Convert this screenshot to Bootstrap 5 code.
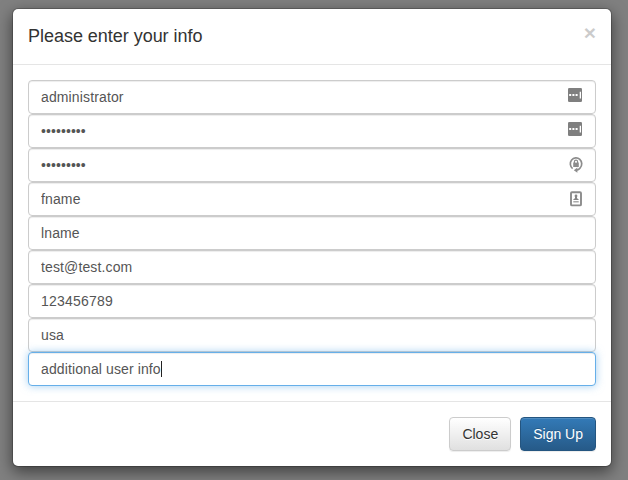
<!DOCTYPE html>
<html lang="en">
<head>
<meta charset="utf-8">
<meta name="viewport" content="width=device-width, initial-scale=1">
<title>Please enter your info</title>
<link rel="stylesheet" href="https://cdn.jsdelivr.net/npm/bootstrap@5.3.0/dist/css/bootstrap.min.css">
<style>
body { background: #808080; font: 14px/20px "Liberation Sans", Arial, sans-serif; color: #333; height: 480px; overflow: hidden; }
.signup-dialog { width: 600px; max-width: none; margin: 8px 0 0 12px; }
.signup-dialog .modal-content { border: 1px solid rgba(0,0,0,.2); border-radius: 6px; box-shadow: 0 5px 15px rgba(0,0,0,.5); background: #fff; background-clip: padding-box; color: #333; }
.signup-dialog .modal-header { height: 56px; padding: 15px; border-bottom: 1px solid #e5e5e5; border-radius: 0; }
.signup-dialog .modal-title { font-size: 18px; line-height: 25px; font-weight: 400; letter-spacing: -.03px; }
.dismiss { border: 0; padding: 0; background: none; font-size: 21px; line-height: 21px; font-weight: 700; color: #000; opacity: .2; text-shadow: 0 1px 0 #fff; margin-top: -2px; }
.signup-dialog .modal-body { padding: 15px; }
.signup-dialog .form-control { height: 34px; padding: 6px 12px; font-size: 14px; line-height: 20px; letter-spacing: .13px; color: #555; border: 1px solid #ccc; border-radius: 4px; background: #fff; box-shadow: inset 0 1px 1px rgba(0,0,0,.075); }
.signup-dialog .form-control[type=password] { letter-spacing: .08px; }
.signup-dialog .form-control[inputmode=numeric] { letter-spacing: .22px; }
.signup-dialog .form-control.editing { letter-spacing: .11px; border-color: #66afe9; box-shadow: inset 0 1px 1px rgba(0,0,0,.075), 0 0 8px rgba(102,175,233,.6); white-space: nowrap; }
.caret-bar { display: inline-block; width: 1px; height: 16px; background: #222; vertical-align: -3px; }
.field-icon { position: absolute; right: 12px; top: 8px; }
.field-icon.dots { right: 13px; top: 7px; }
.signup-dialog .modal-footer { padding: 15px; border-top: 1px solid #e5e5e5; gap: 9px; border-radius: 0; }
.signup-dialog .modal-footer > .btn { height: 34px; margin: 0; padding: 6px 12px; font-size: 14px; line-height: 20px; border-radius: 4px; box-shadow: inset 0 1px 0 rgba(255,255,255,.15), 0 1px 1px rgba(0,0,0,.075); }
.signup-dialog .btn-light { color: #333; text-shadow: 0 1px 0 #fff; border-color: #ccc; background: linear-gradient(#fff, #e0e0e0); }
.signup-dialog .btn-primary { color: #fff; text-shadow: 0 -1px 0 rgba(0,0,0,.2); border-color: #245580; background: linear-gradient(#337ab7, #265a88); }
</style>
<script src="https://cdn.jsdelivr.net/npm/bootstrap@5.3.0/dist/js/bootstrap.bundle.min.js"></script>
</head>
<body>
<div class="modal-dialog signup-dialog">
  <form class="modal-content">
    <div class="modal-header d-flex align-items-start justify-content-between">
      <h4 class="modal-title">Please enter your info</h4>
      <button type="button" class="dismiss" aria-label="Close">×</button>
    </div>
    <div class="modal-body">
      <div class="position-relative">
        <input class="form-control" type="text" value="administrator">
        <svg class="field-icon dots" width="16" height="16" viewBox="0 0 16 16"><rect x="1" y="1" width="14" height="14" rx="1.3" fill="#7f7f7f"/><path d="M2.2 7h2v2h-2zM5.4 7h2v2h-2zM8.6 7h2v2h-2zM12.7 4.8h1.3v6.6h-1.3z" fill="#fff"/></svg>
      </div>
      <div class="position-relative">
        <input class="form-control" type="password" value="123456789">
        <svg class="field-icon dots" width="16" height="16" viewBox="0 0 16 16"><rect x="1" y="1" width="14" height="14" rx="1.3" fill="#7f7f7f"/><path d="M2.2 7h2v2h-2zM5.4 7h2v2h-2zM8.6 7h2v2h-2zM12.7 4.8h1.3v6.6h-1.3z" fill="#fff"/></svg>
      </div>
      <div class="position-relative">
        <input class="form-control" type="password" value="123456789">
        <svg class="field-icon" width="16" height="18" viewBox="0 0 16 18" fill="none" stroke="#8c8c8c"><path d="M4.6 12.6A5.7 6 0 1 1 12.1 12Q10.8 13.8 8.5 14.2" stroke-width="1.7"/><path d="M9.4 11.6v5.2L5.8 14.2z" fill="#8c8c8c" stroke="none"/><path d="M6.4 7V5.8a1.6 1.6 0 0 1 3.2 0V7" stroke-width="1.2"/><path d="M5.2 6.6h5.6v4.4H5.2z" fill="#8c8c8c" stroke="none"/></svg>
      </div>
      <div class="position-relative">
        <input class="form-control" type="text" value="fname">
        <svg class="field-icon" width="16" height="18" viewBox="0 0 16 18"><rect x="3" y="2.2" width="10" height="13.2" rx="1" fill="none" stroke="#8c8c8c" stroke-width="1.9"/><circle cx="8" cy="6" r="1.4" fill="#858585"/><path d="M7 7h2v1.2l1.6 1V10H5.4v-.8l1.6-1z" fill="#858585"/><path d="M5.3 11h5.4v1.5H5.3z" fill="#aaa"/></svg>
      </div>
      <input class="form-control" type="text" value="lname">
      <input class="form-control" type="text" value="test@test.com">
      <input class="form-control" type="text" inputmode="numeric" value="123456789">
      <input class="form-control" type="text" value="usa">
      <div class="form-control editing position-relative" role="textbox" contenteditable="true">additional user info<span class="caret-bar"></span></div>
    </div>
    <div class="modal-footer">
      <button type="button" class="btn btn-light">Close</button>
      <button type="button" class="btn btn-primary">Sign Up</button>
    </div>
  </form>
</div>
</body>
</html>
